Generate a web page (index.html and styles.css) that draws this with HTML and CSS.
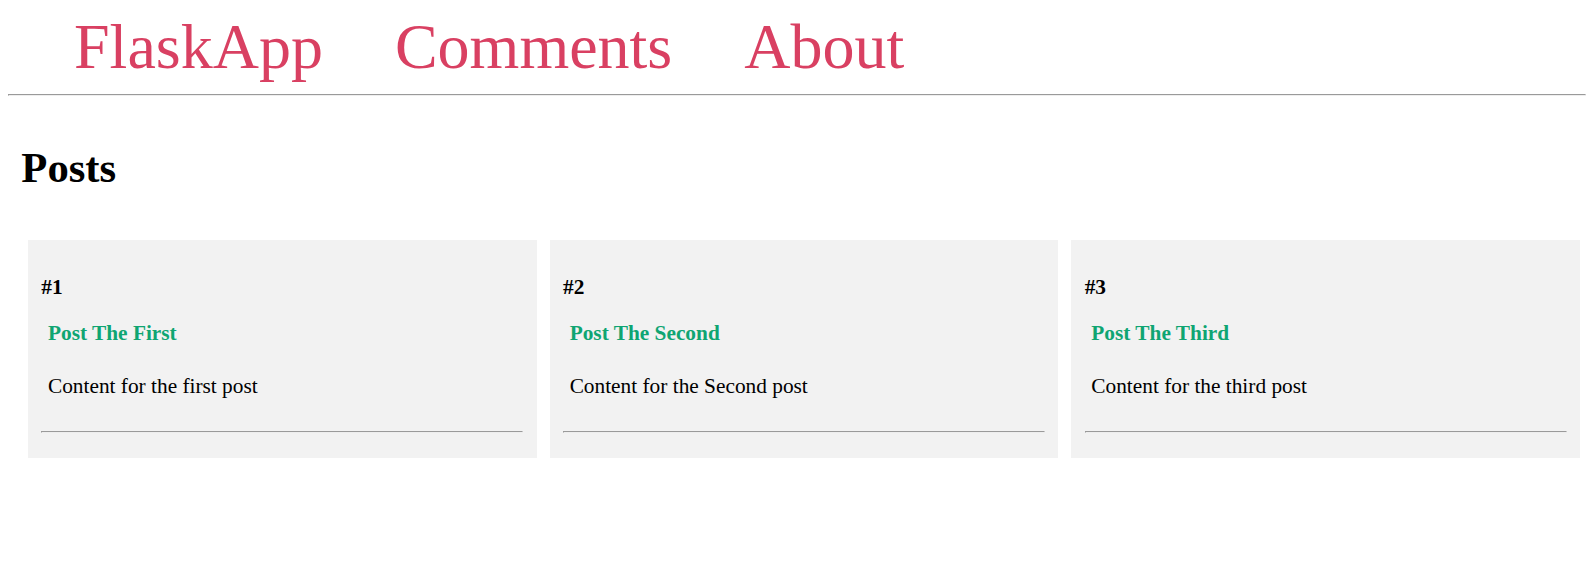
FILE: index.html
```html
<!DOCTYPE html>
<html>
<head>
<meta charset="utf-8">
<title>FlaskApp</title>
<link rel="stylesheet" href="styles.css">
</head>
<body>
<nav class="nav">
  <a class="nav-link" href="#">FlaskApp</a>
  <a class="nav-link" href="#">Comments</a>
  <a class="nav-link" href="#">About</a>
</nav>
<hr class="nav-rule">
<main class="main">
  <h1 class="page-title">Posts</h1>
  <div class="posts">
    <div class="post">
      <h4 class="post-num">#1</h4>
      <h4 class="post-title">Post The First</h4>
      <p class="post-content">Content for the first post</p>
      <hr class="post-rule">
    </div>
    <div class="post">
      <h4 class="post-num">#2</h4>
      <h4 class="post-title">Post The Second</h4>
      <p class="post-content">Content for the Second post</p>
      <hr class="post-rule">
    </div>
    <div class="post">
      <h4 class="post-num">#3</h4>
      <h4 class="post-title">Post The Third</h4>
      <p class="post-content">Content for the third post</p>
      <hr class="post-rule">
    </div>
  </div>
</main>
</body>
</html>
```
FILE: styles.css
```css
html, body {
  background: #ffffff;
}
body {
  margin: 8px;
  font-family: "Liberation Serif", "Times New Roman", serif;
  font-size: 21.333px;
  color: #000;
}
.nav {
  display: flex;
  gap: 72px;
  padding: 2px 0 0 66px;
}
.nav-link {
  font-size: 64px;
  color: #d94062;
  text-decoration: none;
}
hr {
  border-style: solid;
  border-width: 1px;
  border-color: #9a9a9a #eeeeee #eeeeee #9a9a9a;
  height: 0;
}
.nav-rule {
  margin: 10px 0 0;
}
.main {
  padding: 0 6px 0 13.333px;
}
.page-title {
  font-size: 42.667px;
  font-weight: bold;
  margin: 47px 0 0;
}
.posts {
  display: grid;
  grid-template-columns: repeat(3, 1fr);
  gap: 13px;
  margin: 48px 0 0 6.667px;
}
.post {
  background: #f2f2f2;
  padding: 0 13.333px 24.6px;
}
.post-num {
  font-size: 21.333px;
  font-weight: bold;
  margin: 34.667px 0 0;
}
.post-title {
  font-size: 21.333px;
  font-weight: bold;
  color: #0fa572;
  margin: 21.333px 0 0;
  padding-left: 6.667px;
}
.post-content {
  margin: 27.6px 0 0;
  padding-left: 6.667px;
}
.post-rule {
  margin: 32.6px 0 0;
}
```
